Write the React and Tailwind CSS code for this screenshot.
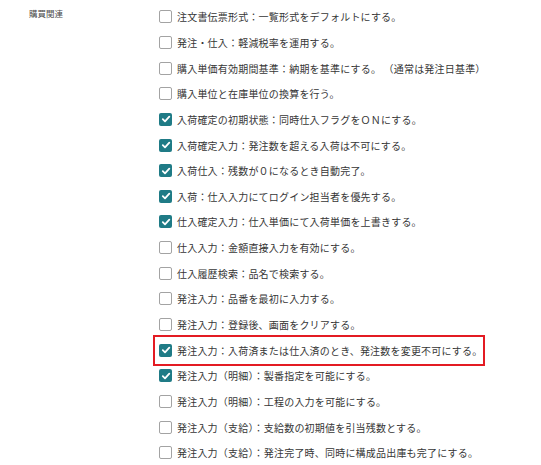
import React from "react";

const items = [
  ["注文書伝票形式：一覧形式をデフォルトにする。", false],
  ["発注・仕入：軽減税率を運用する。", false],
  ["購入単価有効期間基準：納期を基準にする。 （通常は発注日基準）", false],
  ["購入単位と在庫単位の換算を行う。", false],
  ["入荷確定の初期状態：同時仕入フラグをＯＮにする。", true],
  ["入荷確定入力：発注数を超える入荷は不可にする。", true],
  ["入荷仕入：残数が０になるとき自動完了。", true],
  ["入荷：仕入入力にてログイン担当者を優先する。", true],
  ["仕入確定入力：仕入単価にて入荷単価を上書きする。", true],
  ["仕入入力：金額直接入力を有効にする。", false],
  ["仕入履歴検索：品名で検索する。", false],
  ["発注入力：品番を最初に入力する。", false],
  ["発注入力：登録後、画面をクリアする。", false],
  ["発注入力：入荷済または仕入済のとき、発注数を変更不可にする。", true, true],
  ["発注入力（明細）：製番指定を可能にする。", true],
  ["発注入力（明細）：工程の入力を可能にする。", false],
  ["発注入力（支給）：支給数の初期値を引当残数とする。", false],
  ["発注入力（支給）：発注完了時、同時に構成品出庫も完了にする。", false],
];

function Box({ checked }) {
  if (checked) {
    return (
      <span className="flex h-[13px] w-[13px] shrink-0 items-center justify-center rounded-[2px] bg-[#1f7b86]">
        <svg width="10" height="10" viewBox="0 0 10 10">
          <path d="M1.8 5.2 L4 7.3 L8.3 2.6" fill="none" stroke="white" strokeWidth="1.8" strokeLinecap="round" strokeLinejoin="round" />
        </svg>
      </span>
    );
  }
  return <span className="h-[13px] w-[13px] shrink-0 rounded-[2px] border border-[#a3a3a3] bg-white" />;
}

export default function App() {
  return (
    <div className="h-[465px] w-[541px] bg-white font-['Noto_Sans_CJK_JP',sans-serif] text-[#363636]">
      <div className="flex">
        <div className="w-[159px] shrink-0 pl-[29px] pt-[7px] text-[8.5px] leading-[12px] text-[#4a4a4a]">購買関連</div>
        <div className="flex flex-col pt-[4px]">
          {items.map(([t, c, hl], i) => (
            <div key={i} className="relative flex h-[25.65px] items-center gap-[5px] text-[10px]">
              {hl && (
                <div className="absolute left-[-6px] top-[-2px] h-[31px] w-[332px] border-2 border-[#e31b23]" />
              )}
              <Box checked={c} />
              <span className="whitespace-nowrap tracking-[0.2px]">{t}</span>
            </div>
          ))}
        </div>
      </div>
    </div>
  );
}
